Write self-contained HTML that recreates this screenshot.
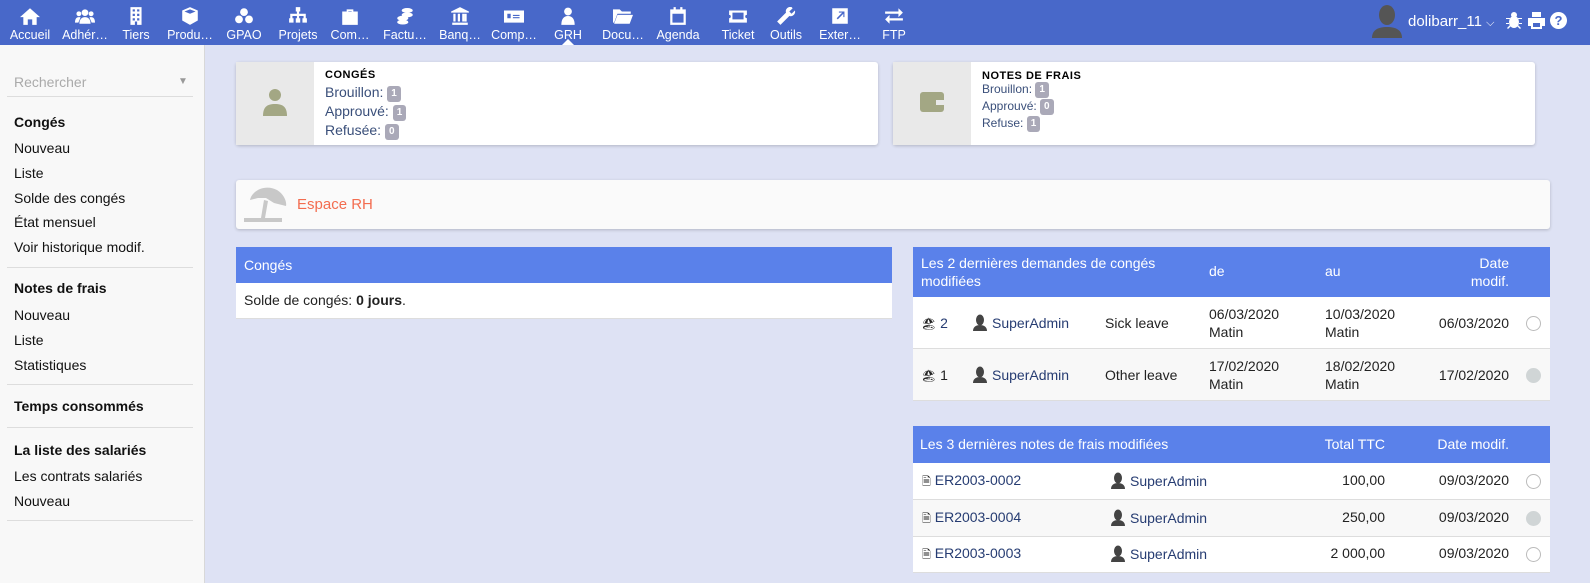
<!DOCTYPE html>
<html><head><meta charset="utf-8"><style>
*{box-sizing:border-box;margin:0;padding:0}
body{width:1590px;height:583px;overflow:hidden;background:#dee2f4;font-family:"Liberation Sans",sans-serif;font-size:14px;color:#222;position:relative}
.top{position:absolute;left:0;top:0;width:1590px;height:45px;background:#4868c9}
.mi{position:absolute;top:0;width:60px;text-align:center;color:#fff;font-size:12.5px}
.mi svg{display:block;margin:7px auto 3px;width:20px;height:18px;fill:#fff}
.side{position:absolute;left:0;top:45px;width:205px;height:538px;background:#f8f8f8;border-right:1px solid #d8d8d8}
.side div{position:absolute;left:14px;font-size:14px;color:#111}
.side .b{font-weight:bold}
.side hr{position:absolute;left:7px;width:186px;border:0;border-top:1px solid #ddd}
.box{position:absolute;background:#fff;box-shadow:0 1px 3px rgba(0,0,0,.2);border-radius:3px}
.ic{position:absolute;left:0;top:0;bottom:0;width:78px;background:#e9e9e9}
.bt{position:absolute;left:89px;font-size:14px;color:#3a4f7a;line-height:19px}
.badge{display:inline-block;background:#aaa9b8;color:#fff;font-size:10px;font-weight:bold;border-radius:3px;padding:2px 4px;line-height:12px;vertical-align:1px}
.th{position:absolute;background:#5a81ea;color:#fff;font-size:14px}
.row{position:absolute;border-bottom:1px solid #ddd;font-size:14px}
.abs{position:absolute}
.lnk{color:#263c72}
.circ{position:absolute;width:15px;height:15px;border-radius:50%;border:1px solid #bbb}
.u{display:inline-block;width:14px;height:17px;vertical-align:-3px;margin-right:5px}
</style></head><body>
<div class="top">
<div class="mi" style="left:0"><svg viewBox="0 0 18 16"><path d="M9 1 0 9h3v7h4v-5h4v5h4V9h3z"/></svg>Accueil</div>
<div class="mi" style="left:55px"><svg viewBox="0 0 18 16"><circle cx="9" cy="5" r="3"/><circle cx="3.5" cy="6" r="2.2"/><circle cx="14.5" cy="6" r="2.2"/><path d="M4 15c0-4 2-6 5-6s5 2 5 6zM0 14c0-3 1-5 3.5-5 1 0 1.5.3 1.5.3L3 14zM18 14c0-3-1-5-3.5-5-1 0-1.5.3-1.5.3L15 14z"/></svg>Adhér…</div>
<div class="mi" style="left:106px"><svg viewBox="0 0 18 16"><path d="M4 0h10v16h-4v-3H8v3H4zM6 2v2h2V2zm4 0v2h2V2zM6 6v2h2V6zm4 0v2h2V6zM6 10v2h2v-2zm4 0v2h2v-2z"/></svg>Tiers</div>
<div class="mi" style="left:160px"><svg viewBox="0 0 18 16"><path d="M9 0 2 3v9l7 4 7-4V3zM4 4l5-2 5 2-5 2z"/></svg>Produ…</div>
<div class="mi" style="left:214px"><svg viewBox="0 0 18 16"><circle cx="9" cy="4.5" r="3.5"/><circle cx="4.5" cy="11" r="3.5"/><circle cx="13.5" cy="11" r="3.5"/></svg>GPAO</div>
<div class="mi" style="left:268px"><svg viewBox="0 0 18 16"><path d="M7 0h4v4H10v2h6v4h1v4h-4v-4h1V8h-4v2h1v4H7v-4h1V8H4v2h1v4H1v-4h1V6h6V4H7z"/></svg>Projets</div>
<div class="mi" style="left:320px"><svg viewBox="0 0 18 16"><path d="M6 2h6v2h4v12H2V4h4zm1.5 1.5V4h3v-.5z"/></svg>Com…</div>
<div class="mi" style="left:375px"><svg viewBox="0 0 18 16"><ellipse cx="11" cy="3" rx="5" ry="2.2"/><ellipse cx="11" cy="7" rx="5" ry="2.2"/><ellipse cx="7" cy="10" rx="5" ry="2.2"/><ellipse cx="7" cy="13.5" rx="5" ry="2.2"/></svg>Factu…</div>
<div class="mi" style="left:430px"><svg viewBox="0 0 18 16"><path d="M9 0 1 4v1h16V4zM3 6h2v7H3zm4 0h2v7H7zm4 0h2v7h-2zM2 14h14v2H2z"/><rect x="13" y="6" width="2" height="7"/></svg>Banq…</div>
<div class="mi" style="left:484px"><svg viewBox="0 0 18 16"><path d="M0 3h18v11H0zm3 3v4h3V6zm5 1v1h6V7zm0 2v1h6V9z"/></svg>Comp…</div>
<div class="mi" style="left:538px"><svg viewBox="0 0 18 16"><circle cx="9" cy="4" r="3.5"/><path d="M3 16c0-5 2-8 6-8s6 3 6 8z"/></svg>GRH</div>
<div style="position:absolute;left:562px;top:39px;width:0;height:0;border:6px solid transparent;border-bottom-color:#fff;border-top:0"></div>
<div class="mi" style="left:593px"><svg viewBox="0 0 18 16"><path d="M0 2h6l2 2h8v2H4L1 14H0zm4 5h14l-3 8H1z"/></svg>Docu…</div>
<div class="mi" style="left:648px"><svg viewBox="0 0 18 16"><path d="M2 2h14v14H2zM4 6v8h10V6zM5 0h2v3H5zm6 0h2v3h-2z"/></svg>Agenda</div>
<div class="mi" style="left:708px"><svg viewBox="0 0 18 16"><path d="M1 3h16v4a1 1 0 0 0 0 3v4H1v-4a1 1 0 0 0 0-3zm3 2v6h10V5z"/></svg>Ticket</div>
<div class="mi" style="left:756px"><svg viewBox="0 0 18 16"><path d="M15 1l-3 3 2 2 3-3c1 3-2 6-5 5L4 16 1 13l8-8c-1-3 2-6 5-5z"/></svg>Outils</div>
<div class="mi" style="left:810px"><svg viewBox="0 0 18 16"><path d="M2 1h14v14H2zm4 9 1 1 5-5v3h1V4H8v1h3z"/></svg>Exter…</div>
<div class="mi" style="left:864px"><svg viewBox="0 0 18 16"><path d="M1 4h12V1l4 4-4 4V6H1zm16 6H5V7l-4 4 4 4v-3h12z"/></svg>FTP</div>
<svg style="position:absolute;left:1372px;top:4px" width="30" height="34" viewBox="0 0 30 34"><ellipse cx="15" cy="11" rx="8" ry="10" fill="#555"/><path d="M0 34c0-8 6-11 15-11s15 3 15 11z" fill="#555"/></svg>
<div style="position:absolute;left:1408px;top:13px;color:#fff;font-size:15px">dolibarr_11 <span style="font-size:11px">⌵</span></div>
<svg style="position:absolute;left:1506px;top:12px" width="16" height="17" viewBox="0 0 16 17" fill="#fff"><ellipse cx="8" cy="10" rx="5" ry="6"/><circle cx="8" cy="3" r="3"/><path d="M0 6h4v1H0zm12 0h4v1h-4zM0 11h3v1H0zm13 0h3v1h-3zM1 16l3-3 1 1-3 3zm14 0-3-3-1 1 3 3z"/></svg>
<svg style="position:absolute;left:1528px;top:12px" width="17" height="17" viewBox="0 0 17 17" fill="#fff"><path d="M4 0h9v5H4zM0 6h17v8h-3v3H3v-3H0zm5 5v4h7v-4z"/></svg>
<svg style="position:absolute;left:1550px;top:12px" width="17" height="17" viewBox="0 0 17 17"><circle cx="8.5" cy="8.5" r="8.5" fill="#fff"/><text x="8.5" y="13" font-size="13" font-weight="bold" text-anchor="middle" fill="#4868c9" font-family="Liberation Sans">?</text></svg>
</div>

<div class="side">
<div style="top:29px;color:#aaa">Rechercher</div>
<div style="left:178px;top:31px;color:#999;font-size:10px">▼</div>
<hr style="top:51px;left:7px">
<div class="b" style="top:69px">Congés</div>
<div style="top:95px">Nouveau</div>
<div style="top:120px">Liste</div>
<div style="top:145px">Solde des congés</div>
<div style="top:169px">État mensuel</div>
<div style="top:194px">Voir historique modif.</div>
<hr style="top:222px">
<div class="b" style="top:235px">Notes de frais</div>
<div style="top:262px">Nouveau</div>
<div style="top:287px">Liste</div>
<div style="top:312px">Statistiques</div>
<hr style="top:339px">
<div class="b" style="top:353px">Temps consommés</div>
<hr style="top:382px">
<div class="b" style="top:397px">La liste des salariés</div>
<div style="top:423px">Les contrats salariés</div>
<div style="top:448px">Nouveau</div>
<hr style="top:475px">
</div>

<div class="box" style="left:236px;top:62px;width:642px;height:83px">
<div class="ic"><svg style="position:absolute;left:27px;top:27px" width="24" height="27" viewBox="0 0 24 27" fill="#a3a784"><circle cx="12" cy="6" r="6"/><path d="M0 27c0-9 4-12 12-12s12 3 12 12z"/></svg></div>
<div class="bt" style="top:4px;color:#000;font-weight:bold;font-size:11px;letter-spacing:.5px">CONGÉS</div>
<div class="bt" style="top:21px">Brouillon: <span class="badge">1</span></div>
<div class="bt" style="top:40px">Approuvé: <span class="badge">1</span></div>
<div class="bt" style="top:59px">Refusée: <span class="badge">0</span></div>
</div>
<div class="box" style="left:893px;top:62px;width:642px;height:83px">
<div class="ic"><svg style="position:absolute;left:27px;top:30px" width="24" height="20" viewBox="0 0 24 20" fill="#a3a784"><rect x="0" y="0" width="24" height="20" rx="3"/><rect x="16" y="8" width="8" height="5" fill="#e9e9e9"/></svg></div>
<div class="bt" style="top:5px;color:#000;font-weight:bold;font-size:11px;letter-spacing:.5px">NOTES DE FRAIS</div>
<div class="bt" style="top:19px;font-size:12px;line-height:17px">Brouillon: <span class="badge">1</span></div>
<div class="bt" style="top:36px;font-size:12px;line-height:17px">Approuvé: <span class="badge">0</span></div>
<div class="bt" style="top:53px;font-size:12px;line-height:17px">Refuse: <span class="badge">1</span></div>
</div>

<div class="box" style="left:236px;top:180px;width:1314px;height:49px;background:#fafafa">
<svg style="position:absolute;left:8px;top:6px" width="44" height="36" viewBox="0 0 44 36" fill="#c8c8c8"><path d="M6 14C8 4 22 -2 33 4 40 8 43 16 42 20L30 17 22 12 14 12z"/><path d="M20 14l-3 18h4l3-17z"/><rect x="0" y="32" width="38" height="4"/></svg>
<div class="abs" style="left:61px;top:16px;color:#f36d50;font-size:15px">Espace RH</div>
</div>

<div class="th" style="left:236px;top:247px;width:656px;height:36px;padding:10px 8px">Congés</div>
<div class="row" style="left:236px;top:283px;width:656px;height:36px;background:#fff;padding:9px 8px">Solde de congés: <b>0 jours</b>.</div>

<div class="th" style="left:913px;top:247px;width:637px;height:50px">
<div class="abs" style="left:8px;top:7px;line-height:18px">Les 2 dernières demandes de congés<br>modifiées</div>
<div class="abs" style="left:296px;top:16px">de</div>
<div class="abs" style="left:412px;top:16px">au</div>
<div class="abs" style="right:41px;top:7px;line-height:18px;text-align:right">Date<br>modif.</div>
</div>
<div class="row" style="left:913px;top:297px;width:637px;height:52px;background:#fff;line-height:18px">
<div class="abs" style="left:8px;top:17px"><span style="font-size:12px">🏖</span> <span class="lnk">2</span></div>
<div class="abs" style="left:60px;top:17px"><svg class="u" viewBox="0 0 14 17"><ellipse cx="7" cy="6" rx="4" ry="5.5" fill="#444"/><path d="M0 17c0-4 3-6 7-6s7 2 7 6z" fill="#444"/></svg><span class="lnk">SuperAdmin</span></div>
<div class="abs" style="left:192px;top:17px">Sick leave</div>
<div class="abs" style="left:296px;top:8px">06/03/2020<br>Matin</div>
<div class="abs" style="left:412px;top:8px">10/03/2020<br>Matin</div>
<div class="abs" style="right:41px;top:17px">06/03/2020</div>
<div class="circ" style="left:613px;top:19px"></div>
</div>
<div class="row" style="left:913px;top:349px;width:637px;height:52px;background:#f8f8f8;line-height:18px">
<div class="abs" style="left:8px;top:17px"><span style="font-size:12px">🏖</span> 1</div>
<div class="abs" style="left:60px;top:17px"><svg class="u" viewBox="0 0 14 17"><ellipse cx="7" cy="6" rx="4" ry="5.5" fill="#444"/><path d="M0 17c0-4 3-6 7-6s7 2 7 6z" fill="#444"/></svg><span class="lnk">SuperAdmin</span></div>
<div class="abs" style="left:192px;top:17px">Other leave</div>
<div class="abs" style="left:296px;top:8px">17/02/2020<br>Matin</div>
<div class="abs" style="left:412px;top:8px">18/02/2020<br>Matin</div>
<div class="abs" style="right:41px;top:17px">17/02/2020</div>
<div class="circ" style="left:613px;top:19px;background:#d0d5d6;border-color:#d0d5d6"></div>
</div>

<div class="th" style="left:913px;top:426px;width:637px;height:37px">
<div class="abs" style="left:7px;top:10px">Les 3 dernières notes de frais modifiées</div>
<div class="abs" style="right:165px;top:10px">Total TTC</div>
<div class="abs" style="right:41px;top:10px">Date modif.</div>
</div>
<div class="row" style="left:913px;top:463px;width:637px;height:37px;background:#fff">
<div class="abs" style="left:9px;top:9px"><span style="font-size:11px">🗎</span> <span class="lnk">ER2003-0002</span></div>
<div class="abs" style="left:198px;top:9px"><svg class="u" viewBox="0 0 14 17"><ellipse cx="7" cy="6" rx="4" ry="5.5" fill="#444"/><path d="M0 17c0-4 3-6 7-6s7 2 7 6z" fill="#444"/></svg><span class="lnk">SuperAdmin</span></div>
<div class="abs" style="right:165px;top:9px">100,00</div>
<div class="abs" style="right:41px;top:9px">09/03/2020</div>
<div class="circ" style="left:613px;top:11px"></div>
</div>
<div class="row" style="left:913px;top:500px;width:637px;height:37px;background:#f8f8f8">
<div class="abs" style="left:9px;top:9px"><span style="font-size:11px">🗎</span> <span class="lnk">ER2003-0004</span></div>
<div class="abs" style="left:198px;top:9px"><svg class="u" viewBox="0 0 14 17"><ellipse cx="7" cy="6" rx="4" ry="5.5" fill="#444"/><path d="M0 17c0-4 3-6 7-6s7 2 7 6z" fill="#444"/></svg><span class="lnk">SuperAdmin</span></div>
<div class="abs" style="right:165px;top:9px">250,00</div>
<div class="abs" style="right:41px;top:9px">09/03/2020</div>
<div class="circ" style="left:613px;top:11px;background:#d0d5d6;border-color:#d0d5d6"></div>
</div>
<div class="row" style="left:913px;top:537px;width:637px;height:36px;background:#fff">
<div class="abs" style="left:9px;top:8px"><span style="font-size:11px">🗎</span> <span class="lnk">ER2003-0003</span></div>
<div class="abs" style="left:198px;top:8px"><svg class="u" viewBox="0 0 14 17"><ellipse cx="7" cy="6" rx="4" ry="5.5" fill="#444"/><path d="M0 17c0-4 3-6 7-6s7 2 7 6z" fill="#444"/></svg><span class="lnk">SuperAdmin</span></div>
<div class="abs" style="right:165px;top:8px">2 000,00</div>
<div class="abs" style="right:41px;top:8px">09/03/2020</div>
<div class="circ" style="left:613px;top:10px"></div>
</div>
</body></html>
